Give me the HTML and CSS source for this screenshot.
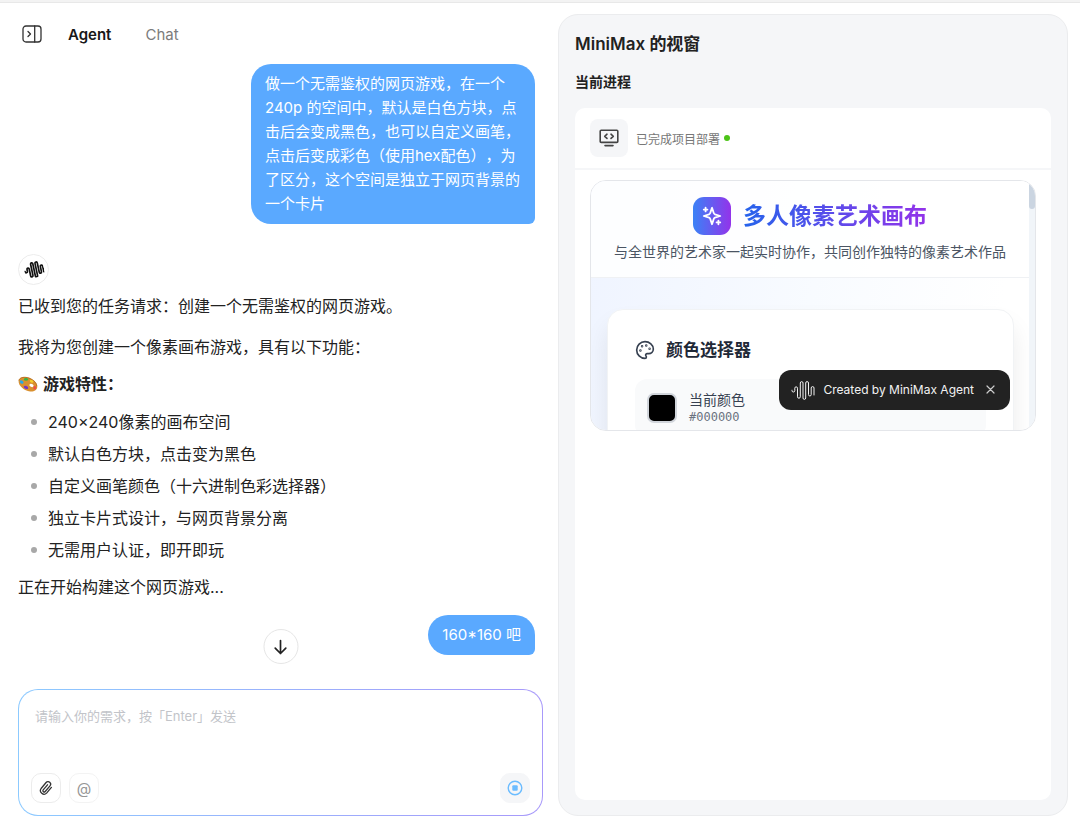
FILE: index.html
```html
<!DOCTYPE html>
<html lang="zh-CN">
<head>
    <meta charset="UTF-8">
    <meta name="viewport" content="width=device-width, initial-scale=1.0">
    <title>MiniMax Agent</title>
    <link rel="stylesheet" href="styles.css">
</head>
<body>

    <!-- Shared wave logo -->
    <svg class="defs" aria-hidden="true">
        <symbol id="wave" viewBox="0 0 24 20">
            <path d="M1 10.2v.4a1.4 1.4 0 0 0 2.8 0V8.2a1.35 1.35 0 0 1 2.7 0v8.6a1.4 1.4 0 0 0 2.8 0V3a1.35 1.35 0 0 1 2.7 0v15a1.35 1.35 0 0 0 2.7 0V3a1.4 1.4 0 0 1 2.8 0v11.6a1.35 1.35 0 0 0 2.7 0V8a1.4 1.4 0 0 1 2.8 0v7" fill="none" stroke="currentColor" stroke-linecap="round"/>
        </symbol>
    </svg>

    <div class="app">
        <main class="chat">
            <nav class="topbar">
                <button class="icon-btn" aria-label="展开侧栏">
                    <svg width="20" height="18" viewBox="0 0 20 18" fill="none" stroke="#333" stroke-width="1.3" stroke-linecap="round" stroke-linejoin="round">
                        <rect x="1" y="1" width="18" height="16" rx="3"/>
                        <path d="M12.7 1v16M6 6.5l2.5 2.5L6 11.5"/>
                    </svg>
                </button>
                <button class="tab active">Agent</button>
                <button class="tab">Chat</button>
            </nav>

            <div class="messages">
                <div class="bubble">做一个无需鉴权的网页游戏，在一个 240p 的空间中，默认是白色方块，点击后会变成黑色，也可以自定义画笔，点击后变成彩色（使用hex配色），为了区分，这个空间是独立于网页背景的一个卡片</div>

                <div class="reply">
                    <div class="avatar"><svg class="avatar-wave"><use href="#wave"/></svg></div>
                    <p>已收到您的任务请求：创建一个无需鉴权的网页游戏。</p>
                    <p>我将为您创建一个像素画布游戏，具有以下功能：</p>
                    <h3>
                        <svg width="20" height="16" viewBox="0 0 20 16" role="img" aria-label="调色板">
                            <path d="M.6 5C.8 1.6 5 .2 9.4 1.2c5.2 1.2 10 5.2 9.9 9.500-.1 3.200-3.200 5.100-7.200 4.700C6.400 14.800.300 10 .6 5z" fill="#d9902f"/>
                            <path d="M.9 4.500C1.500 1.700 5.200.7 9.300 1.600c5 1.200 9.400 4.800 9.500 8.600" fill="none" stroke="#b36b1e" stroke-width=".8"/>
                            <ellipse cx="13.5" cy="9.4" rx="2.2" ry="1.5" fill="#fff" transform="rotate(25 13.5 9.4)"/>
                            <ellipse cx="3.6" cy="6" rx="2" ry="1.5" fill="#27a9e8" transform="rotate(35 3.6 6)"/>
                            <ellipse cx="8" cy="3.4" rx="2.1" ry="1.3" fill="#35b44a"/>
                            <ellipse cx="13.6" cy="5.3" rx="1.9" ry="1.2" fill="#f5cf2b" transform="rotate(25 13.6 5.3)"/>
                            <ellipse cx="8" cy="11.4" rx="2.3" ry="1.5" fill="#7434c8" transform="rotate(20 8 11.4)"/>
                            <ellipse cx="16.8" cy="11.8" rx="1.5" ry="1.7" fill="#ee4f4a"/>
                        </svg>
                        游戏特性：
                    </h3>
                    <ul>
                        <li>240×240像素的画布空间</li>
                        <li>默认白色方块，点击变为黑色</li>
                        <li>自定义画笔颜色（十六进制色彩选择器）</li>
                        <li>独立卡片式设计，与网页背景分离</li>
                        <li>无需用户认证，即开即玩</li>
                    </ul>
                    <p>正在开始构建这个网页游戏...</p>
                </div>

                <div class="bubble">160*160 吧</div>

                <button class="scroll-down" aria-label="滚动到底部">
                    <svg width="14" height="16" viewBox="0 0 14 16" fill="none" stroke="#222" stroke-width="1.7" stroke-linecap="round" stroke-linejoin="round">
                        <path d="M7 1.5v13M1.7 9.2L7 14.5l5.300-5.300"/>
                    </svg>
                </button>
            </div>

            <form class="composer">
                <textarea aria-label="需求" placeholder="请输入你的需求，按「Enter」发送"></textarea>
                <div class="composer-tools">
                    <button type="button" class="tool" aria-label="添加附件">
                        <svg width="14" height="16" viewBox="0 0 14 16" fill="none" stroke="#333" stroke-width="1.3" stroke-linecap="round" stroke-linejoin="round">
                            <path d="M12.4 7.4l-4.800 5.700a3.600 3.600 0 0 1-5.500-4.600l5-6a2.500 2.500 0 0 1 3.900 3.300l-4.800 5.700a1.250 1.250 0 0 1-2-1.600l4.300-5.100"/>
                        </svg>
                    </button>
                    <button type="button" class="tool mention" aria-label="提及">@</button>
                    <button type="button" class="tool stop" aria-label="停止">
                        <svg width="16" height="16" viewBox="0 0 16 16">
                            <circle cx="8" cy="8" r="6.8" fill="none" stroke="#6bbcff" stroke-width="1.4"/>
                            <rect x="5.3" y="5.3" width="5.4" height="5.4" rx="1" fill="#6bbcff"/>
                        </svg>
                    </button>
                </div>
            </form>
        </main>

        <aside class="viewer">
            <h1>MiniMax 的视窗</h1>
            <h2>当前进程</h2>

            <section class="process">
                <header class="process-head">
                    <span class="process-icon">
                        <svg width="20" height="18" viewBox="0 0 20 18" fill="none" stroke="#444" stroke-width="1.6" stroke-linecap="round" stroke-linejoin="round">
                            <rect x="1.2" y="1.2" width="17.6" height="12.2" rx="1"/>
                            <path d="M8 5.2L5.7 7.3 8 9.4M12 5.2l2.3 2.1L12 9.4M6 16.6h8"/>
                        </svg>
                    </span>
                    <span>已完成项目部署</span>
                    <i class="dot"></i>
                </header>

                <div class="preview">
                    <div class="site">
                        <div class="site-head">
                            <div class="site-brand">
                                <span class="site-logo">
                                    <svg width="22" height="22" viewBox="0 0 24 24" fill="none" stroke="#fff" stroke-width="2" stroke-linecap="round" stroke-linejoin="round">
                                        <path d="M12 3l-1.900 5.800a2 2 0 0 1-1.300 1.300L3 12l5.800 1.900a2 2 0 0 1 1.300 1.300L12 21l1.900-5.800a2 2 0 0 1 1.300-1.300L21 12l-5.800-1.900a2 2 0 0 1-1.300-1.300z"/>
                                        <path d="M5 3v4M3 5h4M19 17v4M17 19h4"/>
                                    </svg>
                                </span>
                                <span class="site-title">多人像素艺术画布</span>
                            </div>
                            <p>与全世界的艺术家一起实时协作，共同创作独特的像素艺术作品</p>
                        </div>
                        <div class="picker">
                            <h4>
                                <svg width="20" height="20" viewBox="0 0 24 24" fill="none" stroke="#374151" stroke-width="2" stroke-linecap="round" stroke-linejoin="round">
                                    <circle cx="13.5" cy="6.5" r=".5"/>
                                    <circle cx="17.5" cy="10.5" r=".5"/>
                                    <circle cx="8.5" cy="7.5" r=".5"/>
                                    <circle cx="6.5" cy="12.5" r=".5"/>
                                    <path d="M12 2C6.5 2 2 6.5 2 12s4.5 10 10 10c.926 0 1.648-.746 1.648-1.688 0-.437-.18-.835-.437-1.125-.29-.289-.438-.652-.438-1.125a1.640 1.640 0 0 1 1.668-1.668h1.996c3.051 0 5.555-2.503 5.555-5.554C21.965 6.012 17.461 2 12 2z"/>
                                </svg>
                                颜色选择器
                            </h4>
                            <div class="current">
                                <span class="swatch"></span>
                                <div>
                                    <div class="current-label">当前颜色</div>
                                    <div class="current-hex">#000000</div>
                                </div>
                            </div>
                        </div>
                    </div>
                    <div class="track"><div class="thumb"></div></div>

                    <div class="toast">
                        <svg class="toast-wave"><use href="#wave"/></svg>
                        <span>Created by MiniMax Agent</span>
                        <button aria-label="关闭">
                            <svg width="9" height="9" viewBox="0 0 9 9" stroke="#ccc" stroke-width="1.2" stroke-linecap="round"><path d="M1 1l7 7M8 1L1 8"/></svg>
                        </button>
                    </div>
                </div>
            </section>
        </aside>
    </div>

</body>
</html>
```
FILE: styles.css
```css
* {
    box-sizing: border-box;
}

body {
    margin: 0;
    font-family: Inter, "Noto Sans CJK SC", sans-serif;
    color: #222;
    background-color: #fff;
    text-spacing-trim: space-all;
}

h1, h2, h3, h4, p, ul {
    margin: 0;
    padding: 0;
}

button {
    display: flex;
    align-items: center;
    justify-content: center;
    padding: 0;
    border: none;
    background: none;
    font-family: inherit;
    cursor: pointer;
}

svg {
    display: block;
    flex: none;
}

.defs {
    position: absolute;
    width: 0;
    height: 0;
}

.app {
    display: grid;
    grid-template-columns: 35fr 34fr;
    gap: 15px;
    height: 100vh;
    padding: 12px 12px 15px 18px;
    border-top: 2px solid #f3f3f3;
    box-shadow: inset 0 1px #e8e8e8;
}

/* Left side */
.chat {
    display: flex;
    flex-direction: column;
    min-height: 0;
}

.topbar {
    display: flex;
    align-items: center;
    height: 40px;
    margin-bottom: 10px;
}

.icon-btn {
    margin: 0 26px 0 4px;
}

.tab {
    margin-right: 34px;
    font-size: 15px;
    color: #7c7c7c;
}

.tab.active {
    font-weight: 600;
    color: #181818;
}

.messages {
    position: relative;
    flex: 1;
    min-height: 0;
    padding-right: 8px;
    display: flex;
    flex-direction: column;
    gap: 15px;
}

.bubble {
    align-self: flex-end;
    max-width: 284px;
    padding: 8px 14px;
    border-radius: 20px 20px 6px 20px;
    background-color: #5aa9ff;
    color: #fff;
    font-size: 15px;
    line-height: 24px;
}

.reply {
    padding: 15px 0 0;
    font-size: 16px;
    line-height: 26px;
}

.avatar {
    display: flex;
    align-items: center;
    justify-content: center;
    width: 31px;
    height: 31px;
    margin-bottom: 8px;
    border: 1px solid #ececec;
    border-radius: 50%;
}

.avatar-wave {
    width: 20px;
    height: 17px;
    stroke-width: 2;
    color: #111;
    transform: rotate(-12deg);
}

.reply p + p {
    margin-top: 15px;
}

.reply h3 {
    display: flex;
    align-items: center;
    gap: 5px;
    margin: 11px 0 9px;
    font-size: 16px;
}

.reply ul {
    margin-bottom: 8px;
    list-style: none;
}

.reply li {
    display: flex;
    align-items: center;
    gap: 11px;
    padding-left: 13px;
    line-height: 32px;
}

.reply li::before {
    content: "";
    width: 6px;
    height: 6px;
    border-radius: 50%;
    background-color: #a8a8a8;
}

.scroll-down {
    position: absolute;
    left: 50%;
    bottom: 25px;
    width: 35px;
    height: 35px;
    transform: translateX(-50%);
    border: 1px solid #e6e6e6;
    border-radius: 50%;
    background-color: #fff;
}

.composer {
    display: flex;
    flex-direction: column;
    height: 127px;
    padding: 12px;
    border: 1px solid transparent;
    border-radius: 20px;
    background: linear-gradient(#fff, #fff) padding-box,
                linear-gradient(90deg, #8ccaff, #a899fa) border-box;
}

.composer textarea {
    flex: 1;
    padding: 4px;
    border: none;
    outline: none;
    resize: none;
    background: none;
    font-family: inherit;
    font-size: 13px;
    line-height: 20px;
}

.composer textarea::placeholder {
    color: #c2c4c9;
}

.composer-tools {
    display: flex;
    gap: 8px;
}

.tool {
    width: 30px;
    height: 30px;
    border: 1px solid #ececec;
    border-radius: 10px;
}

.tool.mention {
    border-color: #f3f3f3;
    font-size: 15px;
    color: #959595;
}

.tool.stop {
    margin-left: auto;
    border-color: #f5f6f8;
    background-color: #f5f6f8;
}

/* Right side */
.viewer {
    display: flex;
    flex-direction: column;
    min-height: 0;
    padding: 16px 16px 15px;
    border: 1px solid #ebecee;
    border-radius: 20px;
    background-color: #f5f6f8;
}

.viewer h1 {
    font-size: 17px;
    font-weight: 600;
    line-height: 26px;
}

.viewer h2 {
    margin: 15px 0 16px;
    font-size: 14px;
    font-weight: 600;
    line-height: 20px;
}

.process {
    flex: 1;
    border-radius: 10px;
    background-color: #fff;
}

.process-head {
    display: flex;
    align-items: center;
    gap: 8px;
    height: 62px;
    padding: 0 15px;
    border-bottom: 2px solid #f5f6f8;
    font-size: 12px;
    color: #777;
}

.process-icon {
    display: flex;
    align-items: center;
    justify-content: center;
    width: 38px;
    height: 38px;
    border-radius: 8px;
    background-color: #f5f6f8;
}

.dot {
    width: 6px;
    height: 6px;
    margin-left: -4px;
    border-radius: 50%;
    background-color: #4cc417;
}

.preview {
    position: relative;
    display: flex;
    aspect-ratio: 16 / 9;
    margin: 10px 15px;
    overflow: hidden;
    border: 1px solid #e4e6ea;
    border-radius: 16px;
}

.site {
    flex: 1;
    min-width: 0;
    height: 100%;
    overflow: hidden;
    background: linear-gradient(100deg, #eff4ff, #f8fbff 50%, #fff 90%);
}

.site-head {
    padding: 16px 0 15px;
    border-bottom: 1px solid #eff1f4;
    background-color: rgba(255, 255, 255, 0.85);
    text-align: center;
}

.site-brand {
    display: flex;
    align-items: center;
    justify-content: center;
    gap: 12px;
    margin-bottom: 7px;
}

.site-logo {
    display: flex;
    align-items: center;
    justify-content: center;
    width: 38px;
    height: 38px;
    border-radius: 11px;
    background: linear-gradient(90deg, #3b82f6, #9333ea);
}

.site-title {
    font-size: 23px;
    font-weight: bold;
    line-height: 38px;
    background: linear-gradient(90deg, #2563eb, #9333ea);
    -webkit-background-clip: text;
    background-clip: text;
    color: transparent;
}

.site-head p {
    font-size: 14px;
    line-height: 20px;
    color: #4b5563;
    white-space: nowrap;
}

.picker {
    margin: 31px 15px 0 16px;
    padding: 27px;
    border: 1px solid #f1f3f5;
    border-radius: 16px;
    background-color: #fff;
    box-shadow: 0 16px 24px rgba(0, 0, 0, 0.08);
}

.picker h4 {
    display: flex;
    align-items: center;
    gap: 11px;
    margin-bottom: 16px;
    font-size: 17px;
    line-height: 26px;
    color: #1f2937;
}

.current {
    display: flex;
    align-items: center;
    gap: 12px;
    padding: 12px;
    border-radius: 12px;
    background-color: #f9fafb;
}

.swatch {
    width: 30px;
    height: 30px;
    border: 2px solid #d1d5db;
    border-radius: 7px;
    background-color: #000;
}

.current-label {
    font-size: 14px;
    line-height: 18px;
    color: #374151;
}

.current-hex {
    font-family: "DejaVu Sans Mono", monospace;
    font-size: 12px;
    line-height: 16px;
    color: #6b7280;
}

.track {
    width: 6px;
    padding-top: 1px;
    background-color: #f1f5f9;
}

.thumb {
    height: 27px;
    border-radius: 3px;
    background-color: #cbd5e1;
}

.toast {
    position: absolute;
    right: 25px;
    bottom: 20px;
    display: flex;
    align-items: center;
    gap: 8px;
    height: 40px;
    padding: 0 15px 0 12px;
    border-radius: 12px;
    background-color: #222;
    color: #f2f2f2;
    font-size: 12px;
}

.toast-wave {
    width: 24px;
    height: 20px;
}

.toast button {
    margin-left: 4px;
}
```
